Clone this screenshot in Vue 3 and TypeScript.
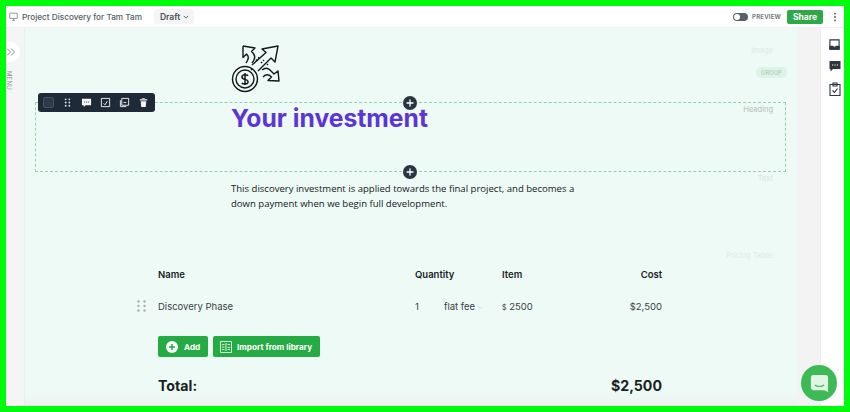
<template>
  <div class="frame">
    <header class="topbar">
      <svg class="doc-icon" viewBox="0 0 12 12" width="9" height="9">
        <path d="M1 1.500h10v7H1zM4 11h4M6 8.500V11" fill="none" stroke="#8a8f96" stroke-width="1.200" />
      </svg>
      <span class="doc-title">Project Discovery for Tam Tam</span>
      <button class="status">Draft <svg viewBox="0 0 8 8" width="6" height="6"><path d="M1 2.500l3 3 3-3" fill="none" stroke="#555b63" stroke-width="1.200" /></svg></button>
      <div class="spacer"></div>
      <span class="toggle"><i></i></span>
      <span class="preview">PREVIEW</span>
      <button class="share">Share</button>
      <svg class="kebab" viewBox="0 0 4 12" width="4" height="10">
        <circle cx="2" cy="2" r="1.100" fill="#4a5058" />
        <circle cx="2" cy="6" r="1.100" fill="#4a5058" />
        <circle cx="2" cy="10" r="1.100" fill="#4a5058" />
      </svg>
    </header>

    <div class="body">
      <aside class="rail">
        <span class="rail-toggle">
          <svg viewBox="0 0 10 10" width="10" height="10"><path d="M1 1.500L4.500 5 1 8.500M5 1.500L8.500 5 5 8.500" fill="none" stroke="#8a8f96" stroke-width="1" /></svg>
        </span>
        <span class="rail-label">MENU</span>
      </aside>

      <main class="canvas">
        <section class="image-block">
          <svg class="hero-icon" viewBox="0 0 50 50" width="50" height="50" fill="none" stroke="#15181d" stroke-width="1.400" stroke-linejoin="round">
            <circle cx="14" cy="36" r="12.500" />
            <circle cx="14" cy="36" r="9" />
            <path d="M17 32.800c-.8-1.300-5.500-1.700-6 .8-.4 2 1.600 2.500 3 2.800 1.600.3 3.400 1 3 3-.5 2.300-5.300 2-6.200.6M14 30v12" stroke-width="1.500" />
            <path d="M21 22L35 9.500 31 6 47 3 44 19 40 15 27 28" />
            <path d="M12 3L24 5 20.500 8.500C25 12 24.500 16 21 20M12 3V14.500L15.500 11C18.500 13.500 18 16 15 20" />
            <path d="M31 27C34 24.500 36.500 24.500 39 27L43 31 47 28 48 38 37 37.500 40.500 34C37.500 31 35 31 32 34" />
            <path d="M25 17.500L29 13.500M30 20l3-3M36 22l1-1M20 27l2-2" stroke-dasharray="1.500 1.500" />
          </svg>
          <span class="block-tag">Image</span>
          <span class="group-tag">GROUP</span>
        </section>

        <section class="heading-block">
          <h1>Your investment</h1>
          <span class="block-tag heading-tag">Heading</span>
          <svg class="add-dot add-top" viewBox="0 0 14 14" width="14" height="14">
            <circle cx="7" cy="7" r="7" fill="#2b3441" />
            <path d="M7 3.500v7M3.500 7h7" stroke="#fff" stroke-width="1.300" />
          </svg>
          <svg class="add-dot add-bottom" viewBox="0 0 14 14" width="14" height="14">
            <circle cx="7" cy="7" r="7" fill="#2b3441" />
            <path d="M7 3.500v7M3.500 7h7" stroke="#fff" stroke-width="1.300" />
          </svg>
          <div class="block-tools">
            <span class="swatch"></span>
            <svg viewBox="0 0 12 12" width="11" height="11" fill="#dfe3e8">
              <circle cx="4" cy="2.500" r="1" /><circle cx="8" cy="2.500" r="1" />
              <circle cx="4" cy="6" r="1" /><circle cx="8" cy="6" r="1" />
              <circle cx="4" cy="9.500" r="1" /><circle cx="8" cy="9.500" r="1" />
            </svg>
            <svg viewBox="0 0 12 12" width="11" height="11">
              <path d="M1 2h10v7H5l-2 2V9H1z" fill="#f2f4f6" />
              <path d="M3.500 5.500h1M5.500 5.500h1M7.500 5.500h1" stroke="#1f2a38" />
            </svg>
            <svg viewBox="0 0 12 12" width="11" height="11" fill="none" stroke="#f2f4f6">
              <path d="M1.500 1.500h9v9h-9zM4 7l1.500 1.500L8 4.500" />
            </svg>
            <svg viewBox="0 0 12 12" width="11" height="11" fill="none" stroke="#f2f4f6">
              <path d="M3 1.500h7.500V9H3zM1.500 3.500v7H8M5 6h3" />
            </svg>
            <svg viewBox="0 0 12 12" width="11" height="11" fill="#f2f4f6">
              <path d="M2 2.500h8v1.200H2zM4.500 1h3v1h-3zM3 4.500h6l-.5 6.500h-5z" />
            </svg>
          </div>
        </section>

        <section class="text-block">
          <p>This discovery investment is applied towards the final project, and becomes a<br />down payment when we begin full development.</p>
          <span class="block-tag text-tag">Text</span>
        </section>

        <section class="pricing">
          <span class="block-tag pricing-tag">Pricing Table</span>
          <div class="row head">
            <span>Name</span>
            <span>Quantity</span>
            <span>Item</span>
            <span class="cost">Cost</span>
          </div>
          <div class="row item" v-for="row in rows" :key="row.name">
            <svg class="grip" viewBox="0 0 9 12" width="9" height="12" fill="#a9afb5">
              <circle cx="1.500" cy="1.500" r="1.200" /><circle cx="7.500" cy="1.500" r="1.200" />
              <circle cx="1.500" cy="6" r="1.200" /><circle cx="7.500" cy="6" r="1.200" />
              <circle cx="1.500" cy="10.500" r="1.200" /><circle cx="7.500" cy="10.500" r="1.200" />
            </svg>
            <span>{{ row.name }}</span>
            <span class="qty">{{ row.qty }}<span class="unit">{{ row.unit }} <svg viewBox="0 0 8 8" width="5" height="5"><path d="M1 2.500l3 3 3-3" fill="none" stroke="#c5cac9" /></svg></span></span>
            <span class="price"><small>$</small> {{ row.price }}</span>
            <span class="cost">{{ row.cost }}</span>
          </div>
          <div class="actions">
            <button class="green add">
              <svg viewBox="0 0 12 12" width="12" height="12">
                <circle cx="6" cy="6" r="6" fill="#fff" />
                <path d="M6 3v6M3 6h6" stroke="#25ab43" stroke-width="1.500" />
              </svg>
              Add
            </button>
            <button class="green import">
              <svg viewBox="0 0 12 12" width="12" height="12" fill="none" stroke="#fff" stroke-width=".8">
                <path d="M.5.5h11v11H.5zM6 2v8M2 3.500h2.500M2 6h2.500M2 8.500h2.500M7.500 3.500H10M7.500 6.500H10M7.500 8.500H10" />
              </svg>
              Import from library
            </button>
          </div>
          <div class="total">
            <span>Total:</span>
            <span>$2,500</span>
          </div>
        </section>
        <div class="fade"></div>
      </main>

      <div class="gutter"></div>

      <aside class="side">
        <svg viewBox="0 0 12 12" width="11" height="11" fill="none" stroke="#2d3540" stroke-width="1.200">
          <path d="M1 1h10v10H1z" />
          <path d="M1 8h3l1 1h2l1-1h3v3H1z" fill="#2d3540" />
        </svg>
        <svg viewBox="0 0 12 12" width="12" height="12">
          <path d="M.5 1h11v8H4l-2.500 2.500V9h-1z" fill="#2d3540" />
          <path d="M3 5h1.200M5.400 5h1.200M7.800 5H9" stroke="#fff" />
        </svg>
        <svg viewBox="0 0 12 14" width="12" height="14" fill="none" stroke="#2d3540" stroke-width="1.100">
          <path d="M1 2.500h10v11H1zM4 1v3h4V1z" />
          <path d="M3.500 8.500L5.500 10.500 8.500 6.500" />
        </svg>
      </aside>
    </div>

    <button class="chat">
      <svg viewBox="0 0 20 20" width="19" height="19">
        <path d="M3.500 1h13A2.500 2.500 0 0 1 19 3.500V19l-4-2H3.500A2.500 2.500 0 0 1 1 14.500v-11A2.500 2.500 0 0 1 3.500 1z" fill="#fff" opacity=".85" />
        <path d="M5 11.500c3 2 7 2 10 0" fill="none" stroke="#3dba55" stroke-width="1.200" />
      </svg>
    </button>
  </div>
</template>

<script setup lang="ts">
const rows = [
  { name: 'Discovery Phase', qty: '1', unit: 'flat fee', price: '2500', cost: '$2,500' }
]
</script>

<style>
html, body { margin: 0; padding: 0; }
</style>

<style scoped>
.frame {
  position: relative;
  box-sizing: border-box;
  width: 850px;
  height: 412px;
  border: 6px solid #00fb0c;
  background: #fff;
  overflow: hidden;
  display: flex;
  flex-direction: column;
  font-family: Inter, "Liberation Sans", sans-serif;
  color: #1c2128;
}

.topbar {
  flex: 0 0 22px;
  display: flex;
  align-items: center;
  padding: 0 7px 0 3px;
  background: #fff;
  box-sizing: border-box;
  border-bottom: 1px solid #eef0f1;
}
.doc-icon { margin-right: 4px; }
.doc-title { font-size: 8.200px; color: #565c64; font-weight: 500; white-space: nowrap; }
.status {
  margin-left: 12px;
  height: 15px;
  padding: 0 5px 0 6px;
  border: 0;
  border-radius: 3px;
  background: #f4f5f6;
  font: 600 8.500px Inter, sans-serif;
  color: #4a5058;
  display: flex;
  align-items: center;
  gap: 3px;
}
.spacer { flex: 1; }
.toggle {
  width: 15px;
  height: 8px;
  border-radius: 4px;
  background: #5b616b;
  display: flex;
  align-items: center;
  padding-left: 1px;
  box-sizing: border-box;
}
.toggle i { width: 6px; height: 6px; border-radius: 50%; background: #fff; display: block; }
.preview { margin-left: 4px; font-size: 6px; font-weight: 700; color: #777c84; letter-spacing: .2px; }
.share {
  margin-left: 6px;
  width: 36px;
  height: 14px;
  border: 0;
  border-radius: 2px;
  background: #2fa84a;
  color: #fff;
  font: 700 8.500px Inter, sans-serif;
  padding: 0;
}
.kebab { margin-left: 10px; }

.body { flex: 1; display: flex; min-height: 0; }

.rail {
  flex: 0 0 19px;
  position: relative;
  background: #f5f5f5;
  border-right: 1px solid #eceeee;
  box-sizing: border-box;
}
.rail-toggle {
  position: absolute;
  left: 0;
  top: 14px;
  width: 14px;
  height: 20px;
  background: #fff;
  border-radius: 0 9px 9px 0;
  display: flex;
  align-items: center;
  justify-content: flex-start;
}
.rail-label {
  position: absolute;
  left: 0;
  top: 43px;
  writing-mode: vertical-rl;
  font-size: 6px;
  line-height: 6px;
  color: #8d9298;
  letter-spacing: .2px;
}

.canvas {
  flex: 0 0 772px;
  background: #edfaf5;
  position: relative;
  overflow: hidden;
}

.fade {
  position: absolute;
  left: 0;
  right: 0;
  bottom: 0;
  height: 14px;
  background: linear-gradient(rgba(238, 240, 238, 0), rgba(238, 240, 238, .7));
}

.block-tag {
  position: absolute;
  font-size: 7.500px;
  color: #c8d2ce;
}

.image-block { height: 74px; padding: 15px 0 0 206px; box-sizing: border-box; position: relative; }
.hero-icon { display: block; }
.image-block .block-tag { right: 24px; top: 18px; color: #dfe9e5; }
.group-tag {
  position: absolute;
  right: 10px;
  top: 39px;
  padding: 2px 5px;
  border-radius: 5px;
  background: #dff3e6;
  color: #b9d2c2;
  font-size: 6px;
  font-weight: 600;
}

.heading-block {
  position: relative;
  height: 70px;
  margin: 0 11px 0 10px;
  padding-left: 195px;
  border: 1px dashed #9ccfa9;
  box-sizing: border-box;
}
.heading-block h1 {
  margin: 0;
  padding-top: 1px;
  font-size: 24.700px;
  line-height: 29px;
  font-weight: 700;
  color: #5c35d6;
  white-space: nowrap;
}
.heading-tag { right: 12px; top: 2px; color: #b5bdba; }
.add-dot { position: absolute; left: 367px; }
.add-top { top: -7px; }
.add-bottom { top: 62px; }

.block-tools {
  position: absolute;
  left: 2px;
  top: -10px;
  width: 117px;
  height: 19px;
  background: #1f2a38;
  border-radius: 3px;
  display: flex;
  align-items: center;
  gap: 8px;
  padding-left: 5px;
  box-sizing: border-box;
}
.swatch {
  width: 11px;
  height: 11px;
  background: #2f3a48;
  border: 1px solid #46505e;
  border-radius: 2px;
  box-sizing: border-box;
}

.text-block { position: relative; padding: 9px 0 0 206px; height: 72px; box-sizing: border-box; }
.text-block p {
  margin: 0;
  font-family: "Open Sans", "Liberation Sans", sans-serif;
  font-size: 9.550px;
  line-height: 15px;
  color: #15181d;
  white-space: nowrap;
}
.text-tag { right: 24px; top: 2px; color: #dbe5e1; }

.pricing { position: relative; padding-left: 133px; width: 637px; box-sizing: border-box; }
.pricing-tag { left: 701px; top: -16px; color: #e0ebe7; white-space: nowrap; }
.row {
  position: relative;
  display: grid;
  grid-template-columns: 257px 87px 1fr auto;
  align-items: center;
  font-size: 9.500px;
}
.head { height: 14px; margin-top: 23px; font-weight: 600; color: #1c2128; }
.item { height: 14px; margin-top: 18px; color: #3b4149; }
.cost { text-align: right; }
.grip { position: absolute; left: -21px; top: 1px; }
.qty { display: flex; }
.unit { margin-left: 25px; white-space: nowrap; }
.price small { font-size: 7px; }

.actions { display: flex; gap: 5px; margin-top: 23px; }
.green {
  height: 21px;
  border: 0;
  border-radius: 2px;
  background: #25ab43;
  color: #fff;
  font: 700 8.200px Inter, sans-serif;
  display: flex;
  align-items: center;
  padding: 0;
}
.add { width: 50px; gap: 6px; padding-left: 8px; }
.import { width: 107px; gap: 5px; padding-left: 7px; }

.total {
  display: flex;
  justify-content: space-between;
  margin-top: 19px;
  font-size: 14.200px;
  line-height: 20px;
  font-weight: 700;
  color: #1a1f26;
}

.gutter { flex: 0 0 24px; background: #f3f3f3; border-right: 1px solid #ececec; box-sizing: border-box; }

.side {
  flex: 1;
  background: #fff;
  display: flex;
  flex-direction: column;
  align-items: center;
  padding: 11px 0 0 4px;
  gap: 10px;
}

.chat {
  position: absolute;
  right: 7px;
  bottom: 5px;
  width: 36px;
  height: 36px;
  border: 0;
  padding: 0;
  border-radius: 50%;
  background: #3dba55;
  display: flex;
  align-items: center;
  justify-content: center;
}
</style>
